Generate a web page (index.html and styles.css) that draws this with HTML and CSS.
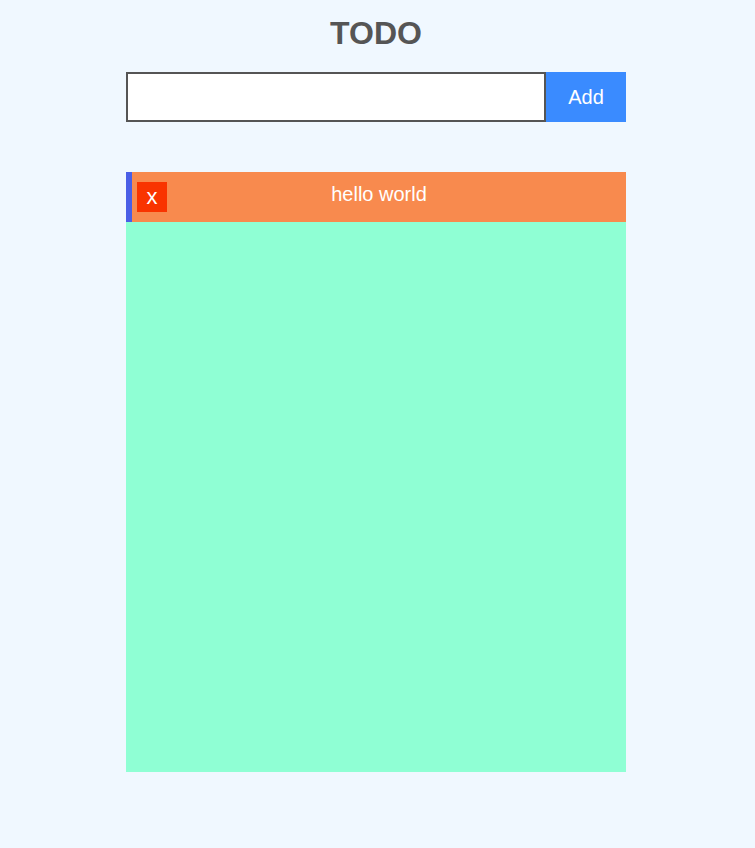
FILE: index.html
```html
<!DOCTYPE html>
<html>
<head>
<meta charset="utf-8">
<link rel="stylesheet" href="styles.css">
</head>
<body>
<div class="app">
  <h1 class="title">TODO</h1>
  <form class="add-form">
    <input class="add-input" type="text">
    <button class="add-btn" type="button">Add</button>
  </form>
  <div class="list">
    <div class="item">
      <button class="del-btn" type="button">x</button>
      <span class="item-text">hello world</span>
    </div>
  </div>
</div>
</body>
</html>
```
FILE: styles.css
```css
html, body {
  margin: 0;
  padding: 0;
  background: #f0f8ff;
  font-family: "Liberation Sans", Arial, sans-serif;
}
.app {
  width: 500px;
  margin-left: calc(50% - 251.5px);
  padding-top: 15px;
  display: flex;
  flex-direction: column;
}
.title {
  margin: 0 0 21px;
  text-align: center;
  font-size: 32px;
  font-weight: bold;
  color: #555555;
  line-height: 36px;
}
.add-form {
  display: flex;
  height: 50px;
  margin: 0 0 50px;
}
.add-input {
  flex: 1;
  box-sizing: border-box;
  height: 50px;
  margin: 0;
  border: 2px solid #555555;
  background: #ffffff;
  outline: none;
  font-size: 20px;
  padding: 0 10px;
}
.add-btn {
  width: 80px;
  height: 50px;
  margin: 0;
  border: none;
  background: #3a8bff;
  color: #ffffff;
  font-family: "Liberation Sans", Arial, sans-serif;
  font-size: 20px;
  padding: 0;
}
.list {
  height: 600px;
  background: #8fffd4;
  display: flex;
  flex-direction: column;
}
.item {
  position: relative;
  height: 50px;
  box-sizing: border-box;
  border-left: 6px solid #4a5fe6;
  background: #f88a4e;
  display: flex;
  align-items: center;
  justify-content: center;
  padding-bottom: 6px;
}
.del-btn {
  position: absolute;
  left: 5px;
  top: 10px;
  width: 30px;
  height: 30px;
  border: none;
  margin: 0;
  padding: 0;
  background: #f93400;
  color: #ffffff;
  font-family: "Liberation Sans", Arial, sans-serif;
  font-size: 22px;
  line-height: 26px;
}
.item-text {
  color: #ffffff;
  font-size: 20px;
}
```
